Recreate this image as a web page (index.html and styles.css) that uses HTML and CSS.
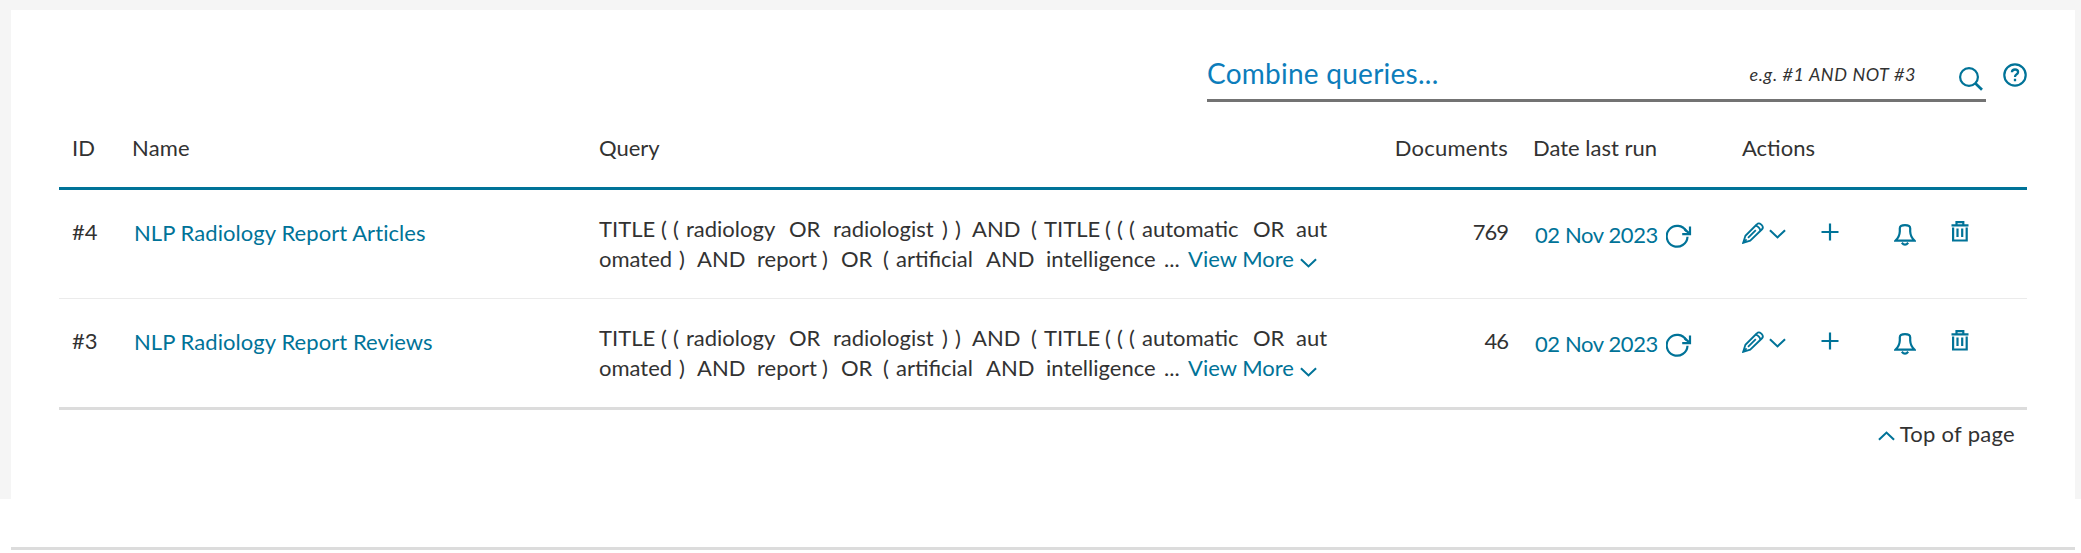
FILE: index.html
```
<!DOCTYPE html>
<html lang="en">
<head>
<meta charset="utf-8">
<title>Search history</title>
<link rel="stylesheet" href="styles.css">
</head>
<body>
<svg width="0" height="0" class="sprite" aria-hidden="true">
  <symbol id="chevron" viewBox="0 0 18 10"><path d="M1 1l8 7.6L17 1"/></symbol>
  <symbol id="refresh" viewBox="0 0 26 24"><path d="M21.5 12.7A10.4 10.4 0 1 1 20.2 7.2"/><path d="M24 2.5v7.6h-7.8M23.8 9.8l-5.3-4.6"/></symbol>
  <symbol id="pencil" viewBox="0 0 22 22"><path d="M1.2 20.8l2.2-7L14.7 2.500q2.100-2.200 4.300-.1l.8.8q2.100 2.200 0 4.300L8.200 18.700z"/><path d="M13.500 3.700q3.800 1 5 5M6 15.800l7.800-7.700M1.200 20.800l3.400-3.400"/></symbol>
  <symbol id="plus" viewBox="0 0 18 18"><path d="M9 .5v17M.5 9h17"/></symbol>
  <symbol id="bell" viewBox="0 0 22 22"><path d="M1.6 16.6Q5.6 12.600 5.800 7.500V4.200Q6 1.200 11 1.200T16.200 4.200V7.500Q16.400 12.600 20.400 16.600z"/><path d="M7.800 18.800q3.200 3.800 6.400 0"/></symbol>
  <symbol id="trash" viewBox="0 0 18 21"><path d="M2.100 6.500V19.500H15.700V6.500M.5 4.300H17.500M5.500 4V1.200H12.300V4M6.500 7.500V16M11.200 7.500V16"/></symbol>
</svg>
<div class="page">
  <main class="card">
    <div class="search">
      <div class="field">
        <span class="prompt">Combine queries...</span>
        <span class="hint">e.g. #1 AND NOT #3</span>
        <svg class="icon search-icon" viewBox="0 0 24 24"><circle cx="10" cy="10" r="8.900"/><path class="handle" d="M16 16l7 6.800"/></svg>
      </div>
      <svg class="icon help" viewBox="0 0 24 24"><circle cx="12" cy="12" r="10.700"/><path class="mark" d="M8.900 9.200Q9 6.500 12 6.500t3.100 2.600q0 1.500-1.700 2.500-1.400.8-1.400 2.500M12 15.700v2.500"/></svg>
    </div>
    <div class="table">
      <div class="row head">
        <span>ID</span><span class="h-name">Name</span><span>Query</span>
        <span class="h-docs">Documents</span><span class="h-date">Date last run</span><span class="h-actions">Actions</span>
      </div>
      <div class="row">
        <span class="id">#4</span>
        <a class="name">NLP Radiology Report Articles</a>
        <div class="query">
          <div class="line first"><span>TITLE</span><span>(</span><span>(</span><span>radiology</span><span>OR</span><span>radiologist</span><span>)</span><span>)</span><span>AND</span><span>(</span><span>TITLE</span><span>(</span><span>(</span><span>(</span><span>automatic</span><span>OR</span><span>aut</span></div>
          <div class="line second"><span>omated</span><span>)</span><span>AND</span><span>report</span><span>)</span><span>OR</span><span>(</span><span>artificial</span><span>AND</span><span>intelligence</span><span>...</span><a>View More</a><svg class="icon more"><use href="#chevron"/></svg></div>
        </div>
        <span class="docs">769</span>
        <a class="date">02 Nov 2023<svg class="icon refresh"><use href="#refresh"/></svg></a>
        <div class="actions">
          <svg class="icon pencil"><use href="#pencil"/></svg><svg class="icon caret"><use href="#chevron"/></svg><svg class="icon plus"><use href="#plus"/></svg><svg class="icon bell"><use href="#bell"/></svg><svg class="icon trash"><use href="#trash"/></svg>
        </div>
      </div>
      <div class="row last">
        <span class="id">#3</span>
        <a class="name">NLP Radiology Report Reviews</a>
        <div class="query">
          <div class="line first"><span>TITLE</span><span>(</span><span>(</span><span>radiology</span><span>OR</span><span>radiologist</span><span>)</span><span>)</span><span>AND</span><span>(</span><span>TITLE</span><span>(</span><span>(</span><span>(</span><span>automatic</span><span>OR</span><span>aut</span></div>
          <div class="line second"><span>omated</span><span>)</span><span>AND</span><span>report</span><span>)</span><span>OR</span><span>(</span><span>artificial</span><span>AND</span><span>intelligence</span><span>...</span><a>View More</a><svg class="icon more"><use href="#chevron"/></svg></div>
        </div>
        <span class="docs">46</span>
        <a class="date">02 Nov 2023<svg class="icon refresh"><use href="#refresh"/></svg></a>
        <div class="actions">
          <svg class="icon pencil"><use href="#pencil"/></svg><svg class="icon caret"><use href="#chevron"/></svg><svg class="icon plus"><use href="#plus"/></svg><svg class="icon bell"><use href="#bell"/></svg><svg class="icon trash"><use href="#trash"/></svg>
        </div>
      </div>
    </div>
    <div class="top"><svg class="icon up"><use href="#chevron"/></svg><span>Top of page</span></div>
  </main>
</div>
<footer class="rule"></footer>
</body>
</html>
```
FILE: styles.css
```
* { box-sizing: border-box; }
body { margin: 0; background: #fff; color: #323232; font: 22px/30px Lato, "Open Sans", sans-serif; overflow: hidden; }
.sprite { display: none; }
.page { background: #f5f5f5; height: 499px; padding: 10px 6px 0 11px; }
.card { background: #fff; height: 489px; padding: 0 48px; }
a { color: #007398; }
.icon { display: block; flex: none; fill: none; stroke: #007398; stroke-width: 2.2; }

.search { display: flex; justify-content: flex-end; height: 92px; }
.field { width: 779px; height: 92px; border-bottom: 3px solid #737373; display: flex; align-items: flex-start; }
.prompt { color: #0c7dbb; font-size: 28px; line-height: 40px; margin-top: 43px; letter-spacing: .25px; }
.hint { font-size: 18px; font-style: italic; letter-spacing: .6px; margin: 49px 43px 0 auto; }
.search-icon { width: 24px; height: 24px; margin: 57px 3px 0 0; }
.handle { stroke-width: 2.7; }
.help { width: 24px; height: 24px; margin: 53px 0 0 17px; }
.mark { stroke-width: 2.3; }

.row { display: grid; grid-template-columns: 60px 467px 750px 159px 25px 208px 286px; height: 109px; padding-left: 13px; border-bottom: 1px solid #ebebeb; align-items: start; width: 1968px; }
.row > * { grid-row: 1; white-space: nowrap; }
.head { height: 88px; padding-top: 31px; border-bottom: 3px solid #007398; }
.h-docs, .docs { grid-column: 4; text-align: right; }
.h-docs { letter-spacing: .25px; }
.h-date, .date { grid-column: 6; }
.h-actions, .actions { grid-column: 7; padding-left: 1px; }
.h-name { letter-spacing: .2px; }
.last { height: 111px; border-bottom: 3px solid #dcdcdc; }
.id { margin-top: 27px; }
.name { margin-top: 28px; padding-left: 2px; letter-spacing: .07px; }
.docs { margin-top: 27px; letter-spacing: -1px; }
.date { margin-top: 30px; padding-left: 2px; letter-spacing: -.4px; display: flex; }
.refresh { width: 26px; height: 24px; margin: 4px 0 0 8px; }

.query { margin-top: 24px; }
.line { display: grid; height: 30px; }
.first { grid-template-columns: 62px 12px 13px 103px 44px 109px 13px 17px 59px 13px 61px 12px 12px 13px 111px 43px 32px; }
.second { grid-template-columns: 80px 18px 60px 65px 19px 42px 13px 90px 60px 118px 24px 112px 18px; }
.more { width: 17px; height: 10px; margin-top: 14px; }

.actions { display: flex; align-items: flex-start; }
.pencil { width: 22px; height: 22px; margin-top: 32px; stroke-width: 1.8; }
.caret { width: 17px; height: 10px; margin: 39px 0 0 5px; }
.plus { width: 18px; height: 18px; margin: 33px 0 0 35px; }
.bell { width: 22px; height: 22px; margin: 34px 0 0 55px; }
.trash { width: 18px; height: 21px; margin: 31px 0 0 35px; }

.top { display: flex; justify-content: flex-end; margin-top: 9px; padding-right: 12px; letter-spacing: .3px; }
.up { width: 17px; height: 10px; margin: 12px 5px 0 0; transform: rotate(180deg); }
.rule { height: 3px; margin: 48px 6px 0 11px; background: #dcdcdc; }
```
